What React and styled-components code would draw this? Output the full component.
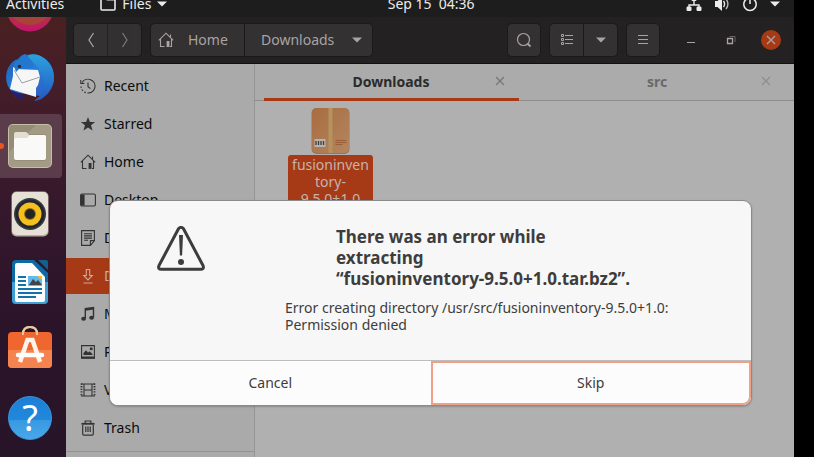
import React from "react";
import styled, { createGlobalStyle } from "styled-components";

const color = {
  panel: "#1d1d1d",
  header: "#242122",
  headerText: "#a8a4a3",
  headerButton: "#343132",
  headerEdge: "#1b1919",
  accent: "#a73a16",
  sidebar: "#aaaaaa",
  content: "#b0b0b0",
  line: "#8c8c8c",
  ink: "#3d3d3d",
};

const GlobalStyle = createGlobalStyle`
  *, *::before, *::after { box-sizing: border-box; }
  body {
    margin: 0;
    background: #000;
    font-family: "Noto Sans", "Open Sans", sans-serif;
    font-size: 14px;
    line-height: 17px;
  }
  button { font: inherit; color: inherit; border: 0; padding: 0; background: none; }
  a { color: inherit; text-decoration: none; }
  svg { display: block; flex: none; }
`;

const Screen = styled.div`
  height: 100vh;
  padding-right: 20px;
  display: flex;
  flex-direction: column;
  overflow: hidden;
`;

const Label = styled.span`
  padding-bottom: 2px;
`;

/* ---------- top panel ---------- */

const TopPanel = styled.header`
  flex: none;
  height: 17px;
  padding: 0 14px 0 6px;
  overflow: hidden;
  display: grid;
  grid-template-columns: 5fr auto 4fr;
  align-content: end;
  background: ${color.panel};
  color: #ececec;
`;

const PanelGroup = styled.div`
  height: 27px;
  display: flex;
  align-items: center;
  justify-content: ${(p) => (p.$end ? "flex-end" : "flex-start")};
  gap: ${(p) => p.$gap || 0}px;
`;

const PanelButton = styled.button`
  display: flex;
  align-items: center;
  gap: 6px;
  white-space: pre;
`;

const Main = styled.div`
  flex: 1;
  min-height: 0;
  display: flex;
`;

/* ---------- dock ---------- */

const Dock = styled.nav`
  flex: none;
  width: 66px;
  overflow: hidden;
  display: flex;
  flex-direction: column;
  gap: 4px;
  background: linear-gradient(#4a2022, #431d28 18%, #36182c 42%, #2b142a 70%, #281428);
`;

const DockItem = styled.button`
  position: relative;
  flex: none;
  width: 62px;
  height: ${(p) => (p.$cut ? 25 : 64)}px;
  display: flex;
  align-items: ${(p) => (p.$cut ? "flex-end" : "center")};
  justify-content: center;
  padding: ${(p) => (p.$cut ? "0 2px 10px 0" : "0 2px 0 0")};
  border-radius: 0 4px 4px 0;
  background: ${(p) => (p.$active ? "#5b3c4a" : "transparent")};
`;

const RunningDot = styled.span`
  position: absolute;
  left: -2px;
  top: 29px;
  width: 6px;
  height: 6px;
  border-radius: 50%;
  background: #e95420;
`;

/* ---------- file manager ---------- */

const FileManager = styled.main`
  position: relative;
  flex: 1;
  min-width: 0;
  display: flex;
  flex-direction: column;
`;

const HeaderBar = styled.div`
  flex: none;
  height: 47px;
  padding: 0 13px 0 7px;
  display: flex;
  align-items: center;
  gap: 8px;
  background: ${color.header};
  border-bottom: 1px solid #121111;
  color: ${color.headerText};
`;

const Linked = styled.div`
  display: flex;
  height: 34px;
  border: 1px solid ${color.headerEdge};
  border-radius: 5px;
  overflow: hidden;
  background: ${color.headerButton};
`;

const HeaderButton = styled.button`
  width: ${(p) => p.$width || 32}px;
  display: flex;
  align-items: center;
  justify-content: center;
  opacity: ${(p) => (p.disabled ? 0.6 : 1)};

  & + & { border-left: 1px solid ${color.headerEdge}; }
`;

const Crumb = styled.button`
  width: ${(p) => p.$width}px;
  display: flex;
  align-items: center;
  gap: ${(p) => (p.$current ? 18 : 14)}px;
  padding-left: ${(p) => (p.$current ? 16 : 7)}px;

  & + & { border-left: 1px solid ${color.headerEdge}; }
`;

const Spacer = styled.div`
  flex: 1;
`;

const WindowControls = styled.div`
  display: flex;
  gap: 20px;
  margin-left: 13px;
`;

const WindowButton = styled.button`
  width: 20px;
  height: 20px;
  border-radius: 50%;
  display: flex;
  align-items: center;
  justify-content: center;
  background: ${(p) => (p.$close ? color.accent : "transparent")};
`;

const Body = styled.div`
  flex: 1;
  min-height: 0;
  display: flex;
`;

const Sidebar = styled.nav`
  flex: none;
  width: 189px;
  padding: 4px 0 0;
  overflow: hidden;
  display: flex;
  flex-direction: column;
  gap: 2px;
  background: ${color.sidebar};
  border-right: 1px solid #959595;
`;

const Place = styled.a`
  flex: none;
  height: 36px;
  padding: 0 14px;
  display: flex;
  align-items: center;
  gap: 8px;
  background: ${(p) => (p.$active ? color.accent : "transparent")};
  color: ${(p) => (p.$active ? "#c9a99d" : "#0c0c0c")};

  svg { color: ${(p) => (p.$active ? "#c9a99d" : "#333")}; }
`;

const Divider = styled.hr`
  width: 100%;
  margin: 3px 0 0;
  border: 0;
  border-top: 1px solid #939393;
`;

const Content = styled.section`
  flex: 1;
  min-width: 0;
  background: ${color.content};
`;

const Tabs = styled.div`
  height: 37px;
  padding: 0 9px;
  display: flex;
  gap: 11px;
  background: #ababab;
  border-bottom: 1px solid ${color.line};
`;

const Tab = styled.div`
  flex: 1;
  height: 37px;
  padding: 0 12px 0 25px;
  display: flex;
  align-items: center;
  border-bottom: 3px solid ${(p) => (p.$active ? color.accent : "transparent")};
  color: ${(p) => (p.$active ? "#2b2b2b" : "#6a6a6a")};
`;

const TabLabel = styled.button`
  flex: 1;
  font-weight: 700;
`;

const TabClose = styled.button`
  width: 14px;
  height: 14px;
  display: flex;
  align-items: center;
  justify-content: center;
  color: ${(p) => (p.$active ? "#777" : "#8e8e8e")};
`;

const Files = styled.div`
  padding: 7px 33px;
  display: flex;
`;

const FileItem = styled.button`
  width: 85px;
  display: flex;
  flex-direction: column;
  align-items: center;
`;

const FileName = styled.span`
  width: 85px;
  padding: 1px 0;
  border-radius: 3px;
  background: ${color.accent};
  color: #c4b3ac;
  text-align: center;
`;

/* ---------- dialog ---------- */

const Overlay = styled.div`
  position: absolute;
  inset: 0;
  padding: 183px 42px 0 43px;
  display: flex;
  align-items: flex-start;
`;

const Dialog = styled.div`
  flex: 1;
  min-width: 0;
  border: 1px solid #8a8a8a;
  border-radius: 9px;
  overflow: hidden;
  background: #f7f7f7;
  box-shadow: 0 1px 2px rgba(0, 0, 0, 0.2);
  color: ${color.ink};
`;

const Message = styled.div`
  min-height: 159px;
  padding: 25px 47px 24px;
  display: flex;
  align-items: flex-start;
  gap: 80px;
`;

const MessageText = styled.div`
  flex: none;
  width: 392px;
  display: flex;
  flex-direction: column;
  align-items: center;
  gap: 10px;
`;

const Title = styled.h1`
  margin: 0;
  width: 290px;
  font-size: 17px;
  line-height: 21px;
  font-weight: 700;
`;

const Unbroken = styled.span`
  white-space: nowrap;
`;

const Detail = styled.p`
  margin: 0;
  width: 392px;
`;

const Actions = styled.div`
  display: grid;
  grid-template-columns: 1fr 1fr;
  border-top: 1px solid #bdbdbd;
`;

const Action = styled.button`
  height: 44px;
  padding-bottom: 2px;
  background: #fcfcfc;
  border: 2px solid ${(p) => (p.$focused ? "#f0a087" : "transparent")};
  border-radius: ${(p) => (p.$focused ? "0 0 8px 0" : "0")};
`;

/* ---------- icons ---------- */

const Line = ({ size = 16, w = 1, children }) => (
  <svg width={size} height={size} viewBox="0 0 16 16" fill="none" stroke="currentColor" strokeWidth={w}>
    {children}
  </svg>
);

const ArrowDown = () => (
  <svg width="10" height="6" viewBox="0 0 10 6"><path d="M0 .5h10L5 5.500z" fill="currentColor" /></svg>
);

const FolderOutline = () => (
  <Line w={1.6}><path d="M1 2.5q0-.9.9-.9h3.6l1.6 2h6.9q1 0 1 1v8.4q0 1-1 1H2q-1 0-1-1z" /></Line>
);

const NetworkIcon = () => (
  <Line w={1.4}>
    <path d="M8 5v4M3 12V9h10v3" />
    <g fill="currentColor" stroke="none"><rect x="5.5" y="1" width="5" height="4" rx="1" /><rect x="0.5" y="10.5" width="5" height="4.5" rx="1.2" /><rect x="10.5" y="10.5" width="5" height="4.5" rx="1.2" /></g>
  </Line>
);

const VolumeIcon = () => (
  <Line w={1.4}>
    <path d="M1 5h2.500L8 1v14l-4.500-4H1z" fill="currentColor" stroke="none" />
    <path d="M9.5 5q2.200 3 0 6" />
    <path d="M12 2.800q3.800 5.200 0 10.400" opacity=".75" />
  </Line>
);

const PowerIcon = () => (
  <Line w={1.5}><path d="M5 2.800a6.200 6.200 0 1 0 6 0M8 1v7" /></Line>
);

const HomeIcon = () => (
  <Line w={1.1}>
    <path d="M.8 8.3 8 1.2l7.2 7.1M2.5 7v7.5h4M13.5 7v7.5H12M12.5 2.5V5" />
    <path d="M8.6 9h2.9v5.9H8.6z" fill="currentColor" stroke="none" />
  </Line>
);

const placeIcons = {
  Recent: (
    <Line w={1.1}>
      <path d="M2.2 4.6A6.9 6.9 0 1 1 8 15" />
      <path d="M1 8.500A7 7 0 0 0 8 15" strokeDasharray="1.6 1.6" />
      <path d="M.8 2v3.500h3.600M8 4.500v4.200l2.400 2" />
    </Line>
  ),
  Starred: (
    <Line><path d="m8 1 1.9 5h5.2l-4.1 3.2 1.5 5.3L8 11.5l-4.5 3L5 9.2.9 6h5.2z" fill="currentColor" stroke="none" /></Line>
  ),
  Home: <HomeIcon />,
  Desktop: (
    <Line w={1.1}><rect x=".6" y="2" width="14.8" height="12" rx="1.5" /><path d="M1 2.5h3.6v11H1z" fill="currentColor" stroke="none" /></Line>
  ),
  Documents: (
    <Line w={1.1}><path d="M1.6.6h12.8v10.2l-4 4.6H1.6zM14.4 10.6h-4v4.6M4 3.7h8M4 5.9h8M4 8.1h8M4 10.3h4" /></Line>
  ),
  Downloads: (
    <Line w={1.1}><path d="M6.3 1.5h3.4v6h2.6L8 12 3.7 7.500h2.600zM3.500 15h9" /></Line>
  ),
  Music: (
    <Line w={1.4}><path d="M5.300 12.500V2.700l8.200-1.200v9.800M5.300 4l8.200-1.200" /><g fill="currentColor" stroke="none"><ellipse cx="3.600" cy="12.800" rx="2.400" ry="2" /><ellipse cx="11.600" cy="11.700" rx="2.400" ry="2" /></g></Line>
  ),
  Pictures: (
    <Line w={1.1}><path d="M1.600 1.600h12.800v12.500H1.600z" /><path d="M1 12.500h14v2H1zM3.500 11V9L6 6.200l2 2.300 1.500-1.300L12.500 10v1z" fill="currentColor" stroke="none" /><circle cx="11.200" cy="4.800" r="1.500" fill="currentColor" stroke="none" /></Line>
  ),
  Videos: (
    <Line w={1.1}><path d="M4 1.600v12.800M12 1.600v12.800M4 8h8M1 2h14M1 14h14" /><path d="M1.500 1.500v13M14.500 1.500v13" strokeWidth="1.800" strokeDasharray="1.300 1.300" /></Line>
  ),
  Trash: (
    <Line w={1.2}><path d="M1.500 3.800h13" strokeWidth="1.800" /><path d="M5.200 3V1h5.600v2M2.700 5v9q0 1.200 1.200 1.200h8.200q1.200 0 1.200-1.200V5M5.800 6.500V12M8 6.500V12M10.200 6.500V12" /></Line>
  ),
};

const Cross = ({ size = 10 }) => (
  <svg width={size} height={size} viewBox="0 0 10 10" stroke="currentColor" strokeWidth="1.300"><path d="m1 1 8 8M9 1 1 9" /></svg>
);

const PackageIcon = () => (
  <svg width="40" height="47" viewBox="1 1 40 47">
    <defs>
      <linearGradient id="box" x1="0" y1="0" x2="1" y2="1"><stop offset="0" stopColor="#a96c3f" /><stop offset="1" stopColor="#b38661" /></linearGradient>
    </defs>
    <rect x="1.500" y="1" width="38" height="46" rx="5" fill="#96765a" />
    <rect x="2" y="1" width="37" height="45" rx="5" fill="url(#box)" />
    <path d="M18.500 1h4v45h-4z" fill="#b4935f" />
    <path d="M4.500 32h11v8h-11z" fill="#b6b3b1" />
    <path d="M6 34v4M8.500 34v4M11 34v4M13.500 34v4" stroke="#3e3a38" strokeWidth="1.300" />
    <path d="M25.500 33.500h11M25.500 35.500h11M25.500 37.500h7" stroke="#9a5f37" />
  </svg>
);

const Art = ({ children }) => (
  <svg width="48" height="48" viewBox="0 0 48 48">{children}</svg>
);

const BrowserArt = () => (
  <Art>
    <defs><linearGradient id="fx" x1="0" y1="0" x2="0" y2="1"><stop offset=".600" stopColor="#b5383a" /><stop offset="1" stopColor="#c4126e" /></linearGradient></defs>
    <circle cx="24" cy="24" r="23.500" fill="url(#fx)" />
    <circle cx="24" cy="19" r="22" fill="#a8433a" />
  </Art>
);

const ThunderbirdArt = () => (
  <Art>
    <defs>
      <linearGradient id="tb" x1="0" y1="0" x2="1" y2="1"><stop offset="0" stopColor="#1b5fb8" /><stop offset=".500" stopColor="#2a7fdc" /><stop offset="1" stopColor="#2a4fb4" /></linearGradient>
      <linearGradient id="tw" x1="0" y1="0" x2="0" y2="1"><stop offset="0" stopColor="#2ba2de" /><stop offset="1" stopColor="#2459c4" /></linearGradient>
    </defs>
    <path d="M4 11C-2 19-1 31 6 38l4 5 2-4 22 3-6 5c10-1 18-10 20-20 1-12-4-20-12-24-6-3-9-3-12-1C18-1 15 1 12 5 8 6 6 8 4 11z" fill="url(#tb)" />
    <path d="M22 1c8-3 18 2 23 11 5 10 3 20-4 28l-2-3-2 7-4 2c5-9 6-17 3-24-3-8-7-14-14-14z" fill="url(#tw)" />
    <path d="M4 36c2 5 8 9 14 10l-2-6z" fill="#27206a" />
    <path d="m7 13 4 2 21 1 2 7-2 8-2 3v9L4 35l3-13z" fill="#f6f6f6" />
    <path d="m8 16 8 13 18-6" fill="none" stroke="#9ca0a6" strokeWidth="1" />
    <path d="M19 0c-2 1-5 4-6 6-3 0-6 3-5 6l2 6 3-3c5 0 10-1 15-5-2-4-6-7-9-10z" fill="#2377cf" />
    <circle cx="13.500" cy="12.500" r="1.800" fill="#3b2a2a" />
  </Art>
);

const FilesArt = () => (
  <Art>
    <rect x="2" y="2" width="44" height="44" rx="5" fill="#c5bfa9" />
    <rect x="3" y="3" width="42" height="42" rx="4" fill="#a39b84" />
    <path d="M3 30 30 3H7Q3 3 3 7z" fill="#958c76" />
    <path d="M8 15q0-2 2-2h11l3-1h14q2 0 2 2v23q0 2-2 2H10q-2 0-2-2z" fill="#8b8269" opacity=".500" />
    <path d="M8 12q0-2 2-2h10q1 0 3 3h15q2 0 2 2v6H8z" fill="#e3ded2" />
    <path d="M8 18q0-2 2-2h11l3-3h14q2 0 2 2v21q0 2-2 2H10q-2 0-2-2z" fill="#f9f9f8" />
  </Art>
);

const SpeakerArt = () => (
  <Art>
    <rect x="5.500" y="1.500" width="37" height="45" rx="5" fill="#b7aea3" />
    <rect x="6" y="2" width="36" height="43" rx="5" fill="#e6e0d6" />
    <circle cx="24" cy="24" r="16" fill="#3b3c42" />
    <circle cx="24" cy="24" r="14.500" fill="#23262f" />
    <circle cx="24" cy="24" r="11.500" fill="#f5c01f" />
    <circle cx="24" cy="24" r="6" fill="#8e7416" />
    <circle cx="24" cy="24" r="5" fill="#232324" />
  </Art>
);

const WriterArt = () => (
  <Art>
    <path d="M10 2h18l14 13v27q0 4-4 4H10q-4 0-4-4V6q0-4 4-4z" fill="#0d6aa3" />
    <path d="M6 24h36v18q0 4-4 4H10q-4 0-4-4z" fill="#3fa0d3" />
    <path d="M32 2h8q2 0 2 2v8z" fill="#12608f" />
    <path d="M11 5h15l13 14v23q0 2-2 2H11q-2 0-2-2V7q0-2 2-2z" fill="#fdfdfd" />
    <path d="M12 19h8M12 23h8M12 27h8M12 31h24M12 35h24M12 39h18" stroke="#1272ac" strokeWidth="2" />
    <path d="M22 18h14v10H22z" fill="#66b9e8" />
    <path d="m23 27 4-6 3 3 2-2 4 5z" fill="#424445" />
    <path d="M32 18h4v3q-4 0-4-3z" fill="#f7bf22" />
  </Art>
);

const SoftwareArt = () => (
  <Art>
    <path d="M17 9V8q0-7 7-7t7 7v1" fill="none" stroke="#e8c9a0" strokeWidth="2" />
    <rect x="2" y="6" width="44" height="36" rx="4" fill="#f0662f" />
    <path d="M2 24h44v14q0 4-4 4H6q-4 0-4-4z" fill="#f5834f" />
    <path d="M17 9V8q0-7 7-7t7 7v1" fill="none" stroke="#e8c9a0" strokeWidth="2" />
    <path d="m14 36 7.500-22h5L34 36" fill="none" stroke="#fff3ea" strokeWidth="4.500" />
    <path d="M12 29h24" stroke="#fff" strokeWidth="4.500" strokeLinecap="round" />
  </Art>
);

const QuestionDisc = styled.span`
  width: 44px;
  height: 44px;
  border-radius: 50%;
  background: linear-gradient(#1c7fd6, #2089dc 54%, #3899e2 55%, #49a8ea);
  border: 1px solid #3c93dc;
  color: #fff;
  font-size: 36px;
  line-height: 42px;
  text-align: center;
`;

const dockItems = [
  { name: "Web browser", art: <BrowserArt />, cut: true },
  { name: "Mail", art: <ThunderbirdArt /> },
  { name: "Files", art: <FilesArt />, active: true },
  { name: "Music player", art: <SpeakerArt /> },
  { name: "Writer", art: <WriterArt /> },
  { name: "Software", art: <SoftwareArt /> },
  { name: "Help", art: <QuestionDisc>?</QuestionDisc> },
];

const FileTab = ({ title, active }) => (
  <Tab $active={active}>
    <TabLabel>{title}</TabLabel>
    <TabClose $active={active} aria-label={"Close " + title}><Cross /></TabClose>
  </Tab>
);

export default function App() {
  return (
    <Screen>
      <GlobalStyle />
      <TopPanel>
        <PanelGroup $gap={36}>
          <PanelButton>Activities</PanelButton>
          <PanelButton><FolderOutline />Files<ArrowDown /></PanelButton>
        </PanelGroup>
        <PanelGroup><PanelButton>{"Sep 15  04:36"}</PanelButton></PanelGroup>
        <PanelGroup $end $gap={12}>
          <NetworkIcon /><VolumeIcon /><PowerIcon /><ArrowDown />
        </PanelGroup>
      </TopPanel>

      <Main>
        <Dock aria-label="Dock">
          {dockItems.map((d) => (
            <DockItem key={d.name} aria-label={d.name} $cut={d.cut} $active={d.active}>
              {d.active && <RunningDot />}
              {d.art}
            </DockItem>
          ))}
        </Dock>

        <FileManager>
          <HeaderBar>
            <Linked>
              <HeaderButton aria-label="Back" $width={33}><Line w={1.3}><path d="M10.500 1 6 8l4.500 7" /></Line></HeaderButton>
              <HeaderButton aria-label="Forward" $width={34} disabled><Line w={1.3}><path d="M5.500 1 10 8l-4.500 7" /></Line></HeaderButton>
            </Linked>
            <Linked>
              <Crumb $width={93}><HomeIcon /><Label>Home</Label></Crumb>
              <Crumb $current $width={128}><Label>Downloads</Label><ArrowDown /></Crumb>
            </Linked>
            <Spacer />
            <Linked>
              <HeaderButton aria-label="Search"><Line w={1.2}><circle cx="7.500" cy="7.500" r="6" /><path d="m11.500 11.500 3 3" strokeWidth="1.800" /></Line></HeaderButton>
            </Linked>
            <Linked>
              <HeaderButton aria-label="List view" $width={33}>
                <Line><path d="M6 3.500h8M6 7.500h8M6 11.500h8" strokeWidth="1.200" /><path d="M2.500 2.500h2v2h-2zM2.500 6.500h2v2h-2zM2.500 10.500h2v2h-2z" /></Line>
              </HeaderButton>
              <HeaderButton aria-label="View options" $width={34}><ArrowDown /></HeaderButton>
            </Linked>
            <Linked>
              <HeaderButton aria-label="Menu"><Line><path d="M3 3.500h10M3 7.500h10M3 11.500h10" /></Line></HeaderButton>
            </Linked>
            <WindowControls>
              <WindowButton aria-label="Minimize"><Line><path d="M4 10.500h8" /></Line></WindowButton>
              <WindowButton aria-label="Restore"><Line><path d="M4.500 6.500h5v5h-5z" strokeWidth="1.300" /><path d="M6.500 4.500h5.500v5.500" opacity=".500" /></Line></WindowButton>
              <WindowButton aria-label="Close" $close><Cross /></WindowButton>
            </WindowControls>
          </HeaderBar>

          <Body>
            <Sidebar aria-label="Places">
              {Object.keys(placeIcons).map((name) => (
                <Place key={name} href={"#" + name} $active={name === "Downloads"}>
                  {placeIcons[name]}
                  <Label>{name}</Label>
                </Place>
              ))}
              <Divider />
            </Sidebar>
            <Content>
              <Tabs>
                <FileTab title="Downloads" active />
                <FileTab title="src" />
              </Tabs>
              <Files>
                <FileItem>
                  <PackageIcon />
                  <FileName>fusioninven<br />tory-<br />9.5.0+1.0</FileName>
                </FileItem>
              </Files>
            </Content>
          </Body>

          <Overlay>
            <Dialog role="alertdialog" aria-labelledby="error-title" aria-describedby="error-detail">
              <Message>
                <svg width="48" height="48" viewBox="0 0 48 48" fill="none" stroke="currentColor">
                  <path d="M21.500 2.800q2.500-3 5 0L46 39.500q1.500 3.800-2.500 3.800h-39q-4 0-2.500-3.800z" strokeWidth="3" strokeLinejoin="round" />
                  <path d="M22 9h4l-.900 20.500h-2.200z" fill="currentColor" stroke="none" />
                  <circle cx="24" cy="36" r="3" fill="currentColor" stroke="none" />
                </svg>
                <MessageText>
                  <Title id="error-title">There was an error while extracting <Unbroken>“fusioninventory-9.5.0+1.0.tar.bz2”.</Unbroken></Title>
                  <Detail id="error-detail">Error creating directory /usr/src/fusioninventory-9.5.0+1.0: Permission denied</Detail>
                </MessageText>
              </Message>
              <Actions>
                <Action>Cancel</Action>
                <Action $focused>Skip</Action>
              </Actions>
            </Dialog>
          </Overlay>
        </FileManager>
      </Main>
    </Screen>
  );
}
